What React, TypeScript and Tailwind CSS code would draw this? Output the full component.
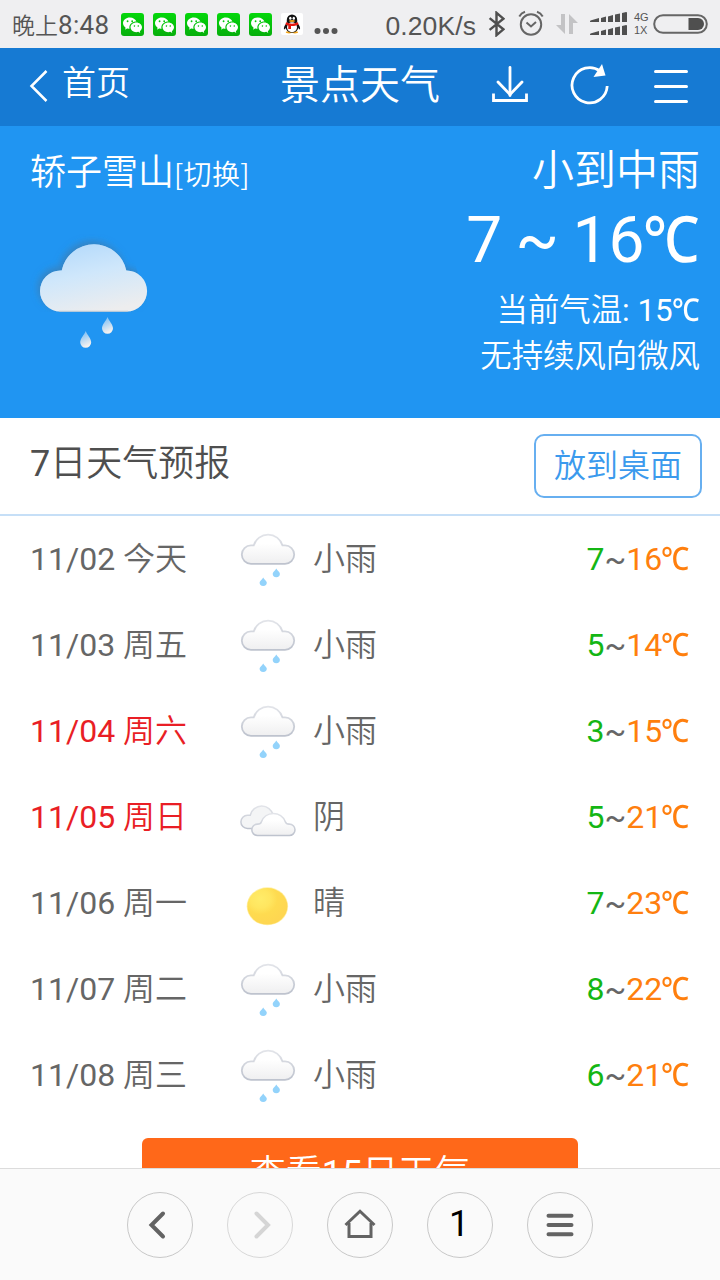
import type { ReactNode } from 'react';
import { BsWechat } from 'react-icons/bs';

type Weather = 'rain' | 'overcast' | 'sunny';

interface DayForecast {
  date: string;
  day: string;
  weekend?: boolean;
  weather: Weather;
  label: string;
  low: number;
  high: number;
}

const FORECAST: DayForecast[] = [
  { date: '11/02', day: '今天', weather: 'rain', label: '小雨', low: 7, high: 16 },
  { date: '11/03', day: '周五', weather: 'rain', label: '小雨', low: 5, high: 14 },
  { date: '11/04', day: '周六', weekend: true, weather: 'rain', label: '小雨', low: 3, high: 15 },
  { date: '11/05', day: '周日', weekend: true, weather: 'overcast', label: '阴', low: 5, high: 21 },
  { date: '11/06', day: '周一', weather: 'sunny', label: '晴', low: 7, high: 23 },
  { date: '11/07', day: '周二', weather: 'rain', label: '小雨', low: 8, high: 22 },
  { date: '11/08', day: '周三', weather: 'rain', label: '小雨', low: 6, high: 21 },
];

function QqIcon() {
  return (
    <svg className="w-[22px] h-[22px]" viewBox="0 0 22 22">
      <rect width="22" height="22" rx="2" fill="#fff" />
      <ellipse cx="8" cy="19.3" rx="3.2" ry="1.1" fill="#f5a81c" />
      <ellipse cx="14" cy="19.3" rx="3.2" ry="1.1" fill="#f5a81c" />
      <path d="M5.3 10.5C3.500 12.500 2.600 14.500 3 16.400c.8 0 1.500-.8 2-1.800M16.700 10.500c1.800 2 2.700 4 2.300 5.900-.8 0-1.500-.8-2-1.800" fill="#111" />
      <ellipse cx="11" cy="13.600" rx="6.500" ry="6.200" fill="#111" />
      <ellipse cx="11" cy="14.200" rx="5" ry="5" fill="#fff" />
      <path d="M5.800 9V7a5.200 5.600 0 0 1 10.400 0v2z" fill="#111" />
      <ellipse cx="9.300" cy="5.200" rx="1.200" ry="1.500" fill="#fff" />
      <ellipse cx="12.800" cy="5.200" rx="1.200" ry="1.500" fill="#fff" />
      <ellipse cx="11" cy="8.100" rx="3" ry="1" fill="#f5a81c" />
      <path d="M5 9.200c4 1.900 8 1.900 12 0l.5 2.200c-2.500 1.400-5 1.800-7.500 1.700v3H7.300v-3.500c-1-.3-2-.7-2.800-1.200z" fill="#e3170d" />
    </svg>
  );
}

function SignalBars() {
  return (
    <svg className="w-[38px] h-[24px]" viewBox="0 0 38 24" fill="#4f4f4f">
      {[0, 13].map((y) => (
        <g key={y} transform={`translate(0 ${y})`}>
          <path d="M0 9.500 0.500 8.400 9 6v4H0z" />
          <path d="M11 6l5-1.400V10h-5z" />
          <path d="M18 4.400 23 3v7h-5z" />
          <path d="M25 2.600 30 1.400V10h-5z" />
          <path d="M32 1l4.200-1 .8.600V10h-5z" />
        </g>
      ))}
    </svg>
  );
}

function StatusBar() {
  return (
    <div className="flex items-center h-12 bg-[#efeff1] text-[#555] shrink-0">
      <div className="ml-3 w-[108.500px] flex items-baseline whitespace-nowrap leading-[50px] pt-[3px]">
        <span className="text-[23px]">晚上</span>
        <span className="text-[26px] tracking-[0.3px]">8:48</span>
      </div>
      <div className="flex items-center gap-[9px]">
        {[0, 1, 2, 3, 4].map((i) => (
          <div key={i} className="w-[23px] h-[23px] rounded-[3px] bg-gradient-to-b from-[#04d80a] to-[#06ae0c] flex items-center justify-center">
            <BsWechat className="w-[19px] h-[19px] text-white" />
          </div>
        ))}
        <QqIcon />
      </div>
      <svg className="ml-[11px] w-6 h-6 mt-3.5" viewBox="0 0 24 24" fill="#555">
        <circle cx="3.500" cy="12" r="3" />
        <circle cx="12" cy="12" r="3" />
        <circle cx="20.500" cy="12" r="3" />
      </svg>
      <div className="ml-auto flex items-center pr-3">
        <span className="text-[26.500px] leading-[50px] pt-[3px] tracking-[0.1px] font-['Liberation_Sans',sans-serif] mr-3">0.20K/s</span>
        <svg className="w-[17px] h-[26px]" viewBox="0 0 16 24" fill="none" stroke="#4f4f4f" strokeWidth="2.300">
          <path d="M1.500 6.500l13 10.500-6.500 5.500V1.500L14.500 7l-13 10.500" />
        </svg>
        <svg className="w-[26px] h-[26px] ml-[13px] mt-[-2px]" viewBox="0 0 26 26" fill="none" stroke="#666" strokeWidth="2">
          <circle cx="13" cy="14.500" r="10.200" />
          <path d="M1.300 6.500C2.500 4.300 4.500 2.500 7 1.700M24.700 6.500C23.500 4.300 21.500 2.500 19 1.700" />
          <path d="M8.500 12.500l4.500 4 5-4.500" />
        </svg>
        <svg className="w-[22px] h-[22px] ml-3" viewBox="0 0 22 22" fill="#c3c3c5">
          <path d="M5 1h4v20L0 12h5z" />
          <path d="M13 21h4V10h5L13 1z" />
        </svg>
        <div className="ml-3 flex">
          <SignalBars />
        </div>
        <div className="ml-1.5 w-[19px] flex flex-col text-[11px] leading-[13px] font-['Liberation_Sans',sans-serif] text-[#555]">
          <span>4G</span>
          <span>1X</span>
        </div>
        <svg className="w-[55px] h-5" viewBox="0 0 55 20">
          <rect x="1.200" y="1.200" width="52.600" height="17.600" rx="8.800" fill="none" stroke="#666" strokeWidth="2" />
          <path d="M35.500 4H45a6 6 0 0 1 0 12h-9.500z" fill="#4f4f4f" />
        </svg>
      </div>
    </div>
  );
}

function Header() {
  return (
    <header className="grid grid-cols-3 h-[78px] bg-[#167ad3] text-white shrink-0">
      <div className="flex items-center pl-7">
        <svg className="w-5 h-[34px] -mt-0.5" viewBox="0 0 20 34" fill="none" stroke="currentColor" strokeWidth="2.500">
          <path d="M18.500 2 3.500 17l15 15" />
        </svg>
        <span className="ml-3.5 text-[34px] leading-[66px] mb-2">首页</span>
      </div>
      <h1 className="text-[40px] leading-[76px] text-center whitespace-nowrap">景点天气</h1>
      <div className="flex items-start justify-end pt-4 pr-8">
        <svg className="w-9 h-10 mr-[42px]" viewBox="0 0 36 40" fill="none" stroke="currentColor" strokeWidth="2.800">
          <path d="M18 3.500v28" strokeLinecap="round" />
          <path d="M6 18l12 12.500L30 18" strokeLinecap="round" />
          <path d="M1.500 29.500v7h33v-7" />
        </svg>
        <svg className="w-10 h-[42px] mr-[43px]" viewBox="0 0 40 42" fill="none" stroke="currentColor" strokeWidth="2.800">
          <path d="M30 7A17.600 17.600 0 1 0 37.200 22" />
          <path d="M32 0 23.500 13 35.500 11.500z" fill="currentColor" stroke="none" />
        </svg>
        <svg className="w-[35px] h-10" viewBox="0 0 35 40" stroke="currentColor" strokeWidth="3" strokeLinecap="round">
          <path d="M2.500 7.500h31M2.500 22.500h31M2.500 37.500h31" />
        </svg>
      </div>
    </header>
  );
}

function HeroCloud() {
  return (
    <svg className="w-[130px] h-[120px]" viewBox="0 0 130 120">
      <defs>
        <linearGradient id="heroCloud" x1="0.250" y1="0" x2="0.600" y2="1">
          <stop offset="0" stopColor="#b4dafb" />
          <stop offset="0.450" stopColor="#cfe7fb" />
          <stop offset="1" stopColor="#ededee" />
        </linearGradient>
        <linearGradient id="heroDrop" x1="0" y1="0" x2="0.300" y2="1">
          <stop offset="0" stopColor="#6cb9f7" />
          <stop offset="1" stopColor="#f4f1ef" />
        </linearGradient>
        <filter id="heroShadow" x="-20%" y="-20%" width="140%" height="140%">
          <feDropShadow dx="-2" dy="-3" stdDeviation="3.500" floodColor="#4a7296" floodOpacity="0.550" />
        </filter>
        <clipPath id="aboveCloud">
          <path d="M0 0H96L120 78H0z" />
        </clipPath>
      </defs>
      <g clipPath="url(#aboveCloud)">
        <path d="M30.500 77.500a20.500 20.500 0 0 1 0-41h1.200A33 33 0 0 1 96.300 36.500h.3a20.500 20.500 0 0 1 0 41z" fill="#7fb8e8" filter="url(#heroShadow)" />
      </g>
      <path d="M30.500 77.500a20.500 20.500 0 0 1 0-41h1.200A33 33 0 0 1 96.300 36.500h.3a20.500 20.500 0 0 1 0 41z" fill="url(#heroCloud)" />
      <path d="M29 77.200H98" stroke="#c6c9cc" strokeWidth="0.800" />
      <path d="M77.500 83c1.500 4 5.500 7.500 5.500 11.300a5.500 5.500 0 0 1-11 0c0-3.800 4-7.300 5.500-11.300z" fill="url(#heroDrop)" />
      <path d="M55.700 97c1.500 4 5.500 7.500 5.500 11.300a5.500 5.500 0 0 1-11 0c0-3.800 4-7.300 5.500-11.300z" fill="url(#heroDrop)" />
    </svg>
  );
}

function WeatherIcon({ type }: { type: Weather }) {
  return (
    <svg className="w-14 h-14 mt-[2px]" viewBox="0 0 56 56">
      {type === 'rain' && (
        <>
          <path
            d="M11 31.800a9.200 9.200 0 0 1 0-18.400h2.700A15 15 0 0 1 42.500 13.400H45a9.200 9.200 0 0 1 0 18.400z"
            fill="url(#cloudFill)"
            stroke="url(#cloudStroke)"
            strokeWidth="1.800"
          />
          <path d="M36.300 36.600c1 2.200 3.600 3.300 3.600 5.200a3.600 3.400 0 0 1-7.200 0c0-1.900 2.600-3 3.600-5.200z" fill="#93d3fb" />
          <path d="M23.200 45.400c1 2.200 3.600 3.300 3.600 5.200a3.600 3.400 0 0 1-7.200 0c0-1.900 2.600-3 3.600-5.200z" fill="#93d3fb" />
        </>
      )}
      {type === 'overcast' && (
        <>
          <path
            d="M7.500 38.500a6.600 6.600 0 0 1 0-13.200h2.700a11.800 11.800 0 0 1 23-.2V38.500z"
            fill="#f4f5f6"
            stroke="url(#cloudStroke)"
            strokeWidth="1.500"
          />
          <path
            d="M17.500 45.500a5.700 5.700 0 0 1 0-11.400c2.200 0 3.300-.5 3.800-2.200a12.800 12.800 0 0 1 24-.2c.6 1.700 1.700 2.400 4 2.400a5.700 5.700 0 0 1 0 11.400z"
            fill="url(#cloudFill)"
            stroke="url(#cloudStroke)"
            strokeWidth="1.600"
          />
        </>
      )}
      {type === 'sunny' && (
        <>
          <ellipse cx="27.400" cy="30.300" rx="20.700" ry="19" fill="#fff0a8" />
          <ellipse cx="27.400" cy="30.300" rx="20" ry="18.300" fill="url(#sunFill)" />
        </>
      )}
    </svg>
  );
}

// The unit glyph is wider than the Roboto digits next to it, so it is condensed a little
function Celsius() {
  return (
    <span className="inline-block origin-left scale-x-[0.88] -ml-[0.03em] -mr-[0.1em] leading-none font-medium font-['Noto_Sans',sans-serif]">℃</span>
  );
}

function ForecastRow({ item }: { item: DayForecast }) {
  return (
    <li className="flex items-center h-[86px] pl-[30px] pr-[30px] text-[32px] leading-[86px] text-[#666]">
      <span className={item.weekend ? 'w-[210px] text-[#e91e25]' : 'w-[210px]'}>
        {item.date} {item.day}
      </span>
      <WeatherIcon type={item.weather} />
      <span className="ml-[17px]">{item.label}</span>
      <span className="ml-auto">
        <span className="text-[#14b614]">{item.low}</span>~<span className="text-[#ff7f0e]">{item.high}<Celsius /></span>
      </span>
    </li>
  );
}

function NavButton({ children, muted }: { children: ReactNode; muted?: boolean }) {
  return (
    <button className={`w-[66px] h-[66px] rounded-full border flex items-center justify-center ${muted ? 'border-[#d8d8d8] text-[#d5d5d5]' : 'border-[#c8c8c8] text-[#636363]'}`}>
      {children}
    </button>
  );
}

function BottomNav() {
  return (
    <nav className="flex justify-center gap-[34px] h-28 pt-[23px] bg-[#fafafa] border-t border-[#dcdcdc] shrink-0">
      <NavButton>
        <svg className="w-8 h-8 -ml-1.5" viewBox="0 0 32 32" fill="none" stroke="currentColor" strokeWidth="4" strokeLinecap="round">
          <path d="M22 4.500 10.500 16 22 27.500" />
        </svg>
      </NavButton>
      <NavButton muted>
        <svg className="w-8 h-8 ml-1" viewBox="0 0 32 32" fill="none" stroke="currentColor" strokeWidth="4" strokeLinecap="round">
          <path d="M10.500 4.500 22 16 10.500 27.500" />
        </svg>
      </NavButton>
      <NavButton>
        <svg className="w-8 h-8" viewBox="0 0 32 32" fill="none" stroke="currentColor" strokeWidth="3">
          <path d="M1.500 16 16 2.200 30.500 16" />
          <path d="M5 14v13.500h22V14" />
        </svg>
      </NavButton>
      <NavButton>
        <span className="text-[36px] leading-none text-black -mt-0.5 -ml-0.5">1</span>
      </NavButton>
      <NavButton>
        <svg className="w-8 h-8" viewBox="0 0 32 32" stroke="currentColor" strokeWidth="4" strokeLinecap="round">
          <path d="M4.500 6.700h23M4.500 16h23M4.500 25.300h23" />
        </svg>
      </NavButton>
    </nav>
  );
}

export default function App() {
  return (
    <div className="w-[720px] h-[1280px] flex flex-col overflow-hidden bg-white font-[Roboto,'Noto_Sans_CJK_SC_DemiLight','Noto_Sans_CJK_SC',sans-serif]">
      {/* Shared gradients for the forecast icons */}
      <svg width="0" height="0" className="absolute">
        <defs>
          <linearGradient id="cloudFill" x1="0" y1="0" x2="0" y2="1">
            <stop offset="0.300" stopColor="#fff" />
            <stop offset="1" stopColor="#efeff0" />
          </linearGradient>
          <linearGradient id="cloudStroke" x1="0" y1="0" x2="0" y2="1">
            <stop offset="0" stopColor="#e2e4e9" />
            <stop offset="1" stopColor="#bec3ce" />
          </linearGradient>
          <radialGradient id="sunFill" cx="0.330" cy="0.300" r="0.700">
            <stop offset="0" stopColor="#ffec69" />
            <stop offset="0.350" stopColor="#ffe660" />
            <stop offset="0.600" stopColor="#fedb50" />
            <stop offset="1" stopColor="#fed651" />
          </radialGradient>
        </defs>
      </svg>

      <StatusBar />
      <Header />

      {/* Current weather */}
      <section className="flex justify-between h-[292px] bg-[#2095f2] text-white shrink-0">
        <div className="pl-[30px]">
          <div className="mt-[19px] flex items-baseline leading-[56px]">
            <span className="text-[36px]">轿子雪山</span>
            <span className="text-[28px] tracking-[0.3px] font-['Noto_Sans_CJK_SC_DemiLight','Noto_Sans_CJK_SC',sans-serif]">[切换]</span>
          </div>
          <div className="mt-[33px]">
            <HeroCloud />
          </div>
        </div>
        <div className="pr-5 flex flex-col items-end whitespace-nowrap">
          <div className="mt-4 text-[42px] leading-[58px]">小到中雨</div>
          <div className="mt-px text-[64px] leading-[80px] [word-spacing:-2.5px]">7 ~ 16<Celsius /></div>
          <div className="mt-[7px] text-[31.400px] leading-[46px]">当前气温: 15<Celsius /></div>
          <div className="text-[31.400px] leading-[46px]">无持续风向微风</div>
        </div>
      </section>

      {/* Forecast */}
      <main className="flex-1 min-h-0 overflow-hidden flex flex-col">
        <div className="flex items-start justify-between h-[98px] pt-4 pl-[30px] pr-[18px] border-b-2 border-[#c6dff7] shrink-0">
          <h2 className="text-[36px] leading-[61px] text-[#4f4f4f]">7日天气预报</h2>
          <button className="w-[168px] h-16 rounded-[10px] border-2 border-[#67aff0] text-[32px] leading-[60px] text-[#3b9aed]">
            放到桌面
          </button>
        </div>
        <ul className="shrink-0">
          {FORECAST.map((item) => (
            <ForecastRow key={item.date} item={item} />
          ))}
        </ul>
        <button className="mt-5 mx-auto w-[436px] h-[72px] rounded-md bg-[#ff6819] text-white text-[36px] leading-[70px] shrink-0">
          查看15日天气
        </button>
      </main>

      <BottomNav />
    </div>
  );
}
